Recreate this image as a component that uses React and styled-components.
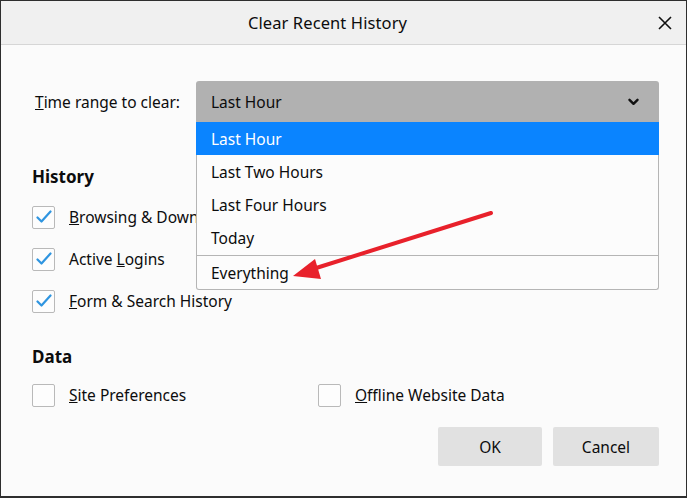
import React from "react";
import styled, { createGlobalStyle } from "styled-components";

const GlobalStyle = createGlobalStyle`
  html, body {
    margin: 0;
    padding: 0;
    background: #fbfbfb;
  }
  * {
    box-sizing: border-box;
  }
`;

const Window = styled.div`
  position: relative;
  width: 687px;
  height: 498px;
  border: 1px solid #2e2e2e;
  border-bottom-width: 2px;
  background: #fbfbfb;
  font-family: "Noto Sans", "Open Sans", sans-serif;
  color: #0c0c0d;
  overflow: hidden;
`;

const TitleBar = styled.div`
  display: flex;
  align-items: center;
  justify-content: center;
  height: 44px;
  padding-right: 32px;
  background: #f0f0f0;
  border-bottom: 1px solid #d6d6d6;
  position: relative;
`;

const Title = styled.div`
  font-size: 16.5px;
  letter-spacing: 0.1px;
`;

const CloseButton = styled.div`
  position: absolute;
  right: 13px;
  top: 14px;
  width: 16px;
  height: 16px;
  display: flex;
  align-items: center;
  justify-content: center;
`;

const Body = styled.div`
  padding: 36px 27px 0 30px;
  display: flex;
  flex-direction: column;
`;

const RangeRow = styled.div`
  position: relative;
  display: flex;
  align-items: center;
  height: 41px;
`;

const RangeLabel = styled.div`
  width: 165px;
  padding-left: 4px;
  font-size: 15.5px;
`;

const Select = styled.div`
  flex: 1;
  height: 41px;
  display: flex;
  align-items: center;
  justify-content: space-between;
  padding: 0 20px 0 15px;
  background: #b1b1b1;
  border-radius: 3px 3px 0 0;
  font-size: 15.5px;
`;

const Menu = styled.div`
  position: absolute;
  left: 165px;
  right: 0;
  top: 41px;
  background: #fcfcfc;
  border: 1px solid #b5b5b5;
  border-top: none;
  border-radius: 0 0 3px 3px;
  z-index: 2;
`;

const MenuItem = styled.div`
  height: 33px;
  display: flex;
  align-items: center;
  padding-top: 1px;
  font-size: 15.5px;
  background: ${({ $active }) => ($active ? "#0a84ff" : "transparent")};
  color: ${({ $active }) => ($active ? "#ffffff" : "#0c0c0d")};
  margin: ${({ $active }) => ($active ? "0 -1px" : "0")};
  padding-left: ${({ $active }) => ($active ? "15px" : "14px")};
`;

const MenuSeparator = styled.div`
  height: 1px;
  background: #b5b5b5;
  margin: 1px 0 0;
`;

const SectionHeading = styled.div`
  font-size: 17px;
  font-weight: 700;
  line-height: 24px;
  margin-top: ${({ $top }) => $top}px;
  margin-left: 1px;
`;

const OptionList = styled.div`
  display: flex;
  flex-direction: column;
  margin-top: ${({ $top }) => $top}px;
`;

const OptionGrid = styled.div`
  display: grid;
  grid-template-columns: 286px 1fr;
  margin-top: ${({ $top }) => $top}px;
`;

const Option = styled.div`
  display: flex;
  align-items: center;
  gap: 14px;
  height: 42px;
  font-size: 15.5px;
  padding-left: 1px;
`;

const Box = styled.div`
  width: 23px;
  height: 23px;
  border: 1px solid #b9b9b9;
  border-radius: 2px;
  background: #fdfdfd;
  display: flex;
  align-items: center;
  justify-content: center;
  flex-shrink: 0;
`;

const Footer = styled.div`
  display: flex;
  justify-content: flex-end;
  gap: 11px;
  margin-top: 11px;
`;

const Button = styled.div`
  width: ${({ $w }) => $w}px;
  height: 39px;
  display: flex;
  align-items: center;
  justify-content: center;
  background: #e1e1e1;
  border-radius: 2px;
  font-size: 15.5px;
`;

const ArrowLayer = styled.svg`
  position: absolute;
  left: 0;
  top: 0;
  pointer-events: none;
  z-index: 3;
`;

const Check = ({ checked }) => (
  <Box>
    {checked && (
      <svg width="16" height="14" viewBox="0 0 16 14">
        <path
          d="M1.5 7.5 L5.5 11.5 L14.5 1.5"
          fill="none"
          stroke="#2f95e0"
          strokeWidth="2.2"
          strokeLinecap="round"
          strokeLinejoin="round"
        />
      </svg>
    )}
  </Box>
);

const Chevron = () => (
  <svg width="11" height="8" viewBox="0 0 11 8">
    <path
      d="M1.5 1.8 L5.5 5.8 L9.5 1.8"
      fill="none"
      stroke="#111"
      strokeWidth="2.4"
      strokeLinecap="round"
      strokeLinejoin="round"
    />
  </svg>
);

const App = () => {
  return (
    <>
      <GlobalStyle />
      <Window>
        <TitleBar>
          <Title>Clear Recent History</Title>
          <CloseButton>
            <svg width="14" height="14" viewBox="0 0 14 14">
              <path d="M1 1 L13 13 M13 1 L1 13" stroke="#111" strokeWidth="1.6" />
            </svg>
          </CloseButton>
        </TitleBar>
        <Body>
          <RangeRow>
            <RangeLabel>
              <u>T</u>ime range to clear:
            </RangeLabel>
            <Select>
              <span>Last Hour</span>
              <Chevron />
            </Select>
            <Menu>
              <MenuItem $active>Last Hour</MenuItem>
              <MenuItem>Last Two Hours</MenuItem>
              <MenuItem>Last Four Hours</MenuItem>
              <MenuItem>Today</MenuItem>
              <MenuSeparator />
              <MenuItem>Everything</MenuItem>
            </Menu>
          </RangeRow>

          <SectionHeading $top={43}>History</SectionHeading>
          <OptionList $top={7}>
            <Option>
              <Check checked />
              <span>
                <u>B</u>rowsing &amp; Download History
              </span>
            </Option>
            <Option>
              <Check checked />
              <span>
                Active <u>L</u>ogins
              </span>
            </Option>
            <Option>
              <Check checked />
              <span>
                <u>F</u>orm &amp; Search History
              </span>
            </Option>
          </OptionList>

          <SectionHeading $top={23}>Data</SectionHeading>
          <OptionGrid $top={5}>
            <Option>
              <Check />
              <span>
                <u>S</u>ite Preferences
              </span>
            </Option>
            <Option>
              <Check />
              <span>
                <u>O</u>ffline Website Data
              </span>
            </Option>
          </OptionGrid>

          <Footer>
            <Button $w={104}>OK</Button>
            <Button $w={106}>Cancel</Button>
          </Footer>
        </Body>

        <ArrowLayer width="687" height="498" viewBox="0 0 687 498">
          <line x1="490" y1="212" x2="312" y2="268" stroke="#e8212b" strokeWidth="4" strokeLinecap="round" />
          <polygon points="292,275 314,258 320,278" fill="#e8212b" />
        </ArrowLayer>
      </Window>
    </>
  );
};

export default App;
